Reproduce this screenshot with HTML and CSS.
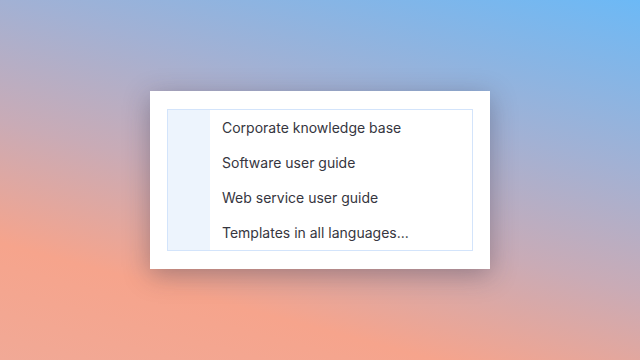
FILE: index.html
```html
<!DOCTYPE html>
<html lang="en">
<head>
    <meta charset="UTF-8">
    <meta name="viewport" content="width=device-width, initial-scale=1.0">
    <title>Documentation menu</title>
    <link rel="stylesheet" href="styles.css">
</head>
<body>
    <div class="card">
        <div class="menu">
            <div class="menu-gutter"></div>
            <ul class="menu-list">
                <li class="menu-item">Corporate knowledge base</li>
                <li class="menu-item">Software user guide</li>
                <li class="menu-item">Web service user guide</li>
                <li class="menu-item">Templates in all languages...</li>
            </ul>
        </div>
    </div>
</body>
</html>
```

FILE: styles.css
```css
* {
    margin: 0;
    padding: 0;
    box-sizing: border-box;
}

body {
    font-family: 'Inter', 'Noto Sans', sans-serif;
    background: linear-gradient(195deg, #6cb9f6 0%, #a2b1d4 32%, #c9abb6 55%, #f6a48c 78%, #f1a996 100%);
    min-height: 100vh;
    display: flex;
    align-items: center;
    justify-content: center;
}

.card {
    background: white;
    width: 340px;
    padding: 18px 17px 18px 17px;
    box-shadow: 0 6px 24px rgba(40, 40, 60, 0.35);
}

.menu {
    display: flex;
    border: 1px solid #d3e4fb;
}

.menu-gutter {
    width: 42px;
    background: #edf4fd;
}

.menu-list {
    list-style: none;
    flex: 1;
}

.menu-item {
    height: 35px;
    line-height: 35px;
    padding-left: 12px;
    font-size: 14px;
    color: #363640;
}
```
